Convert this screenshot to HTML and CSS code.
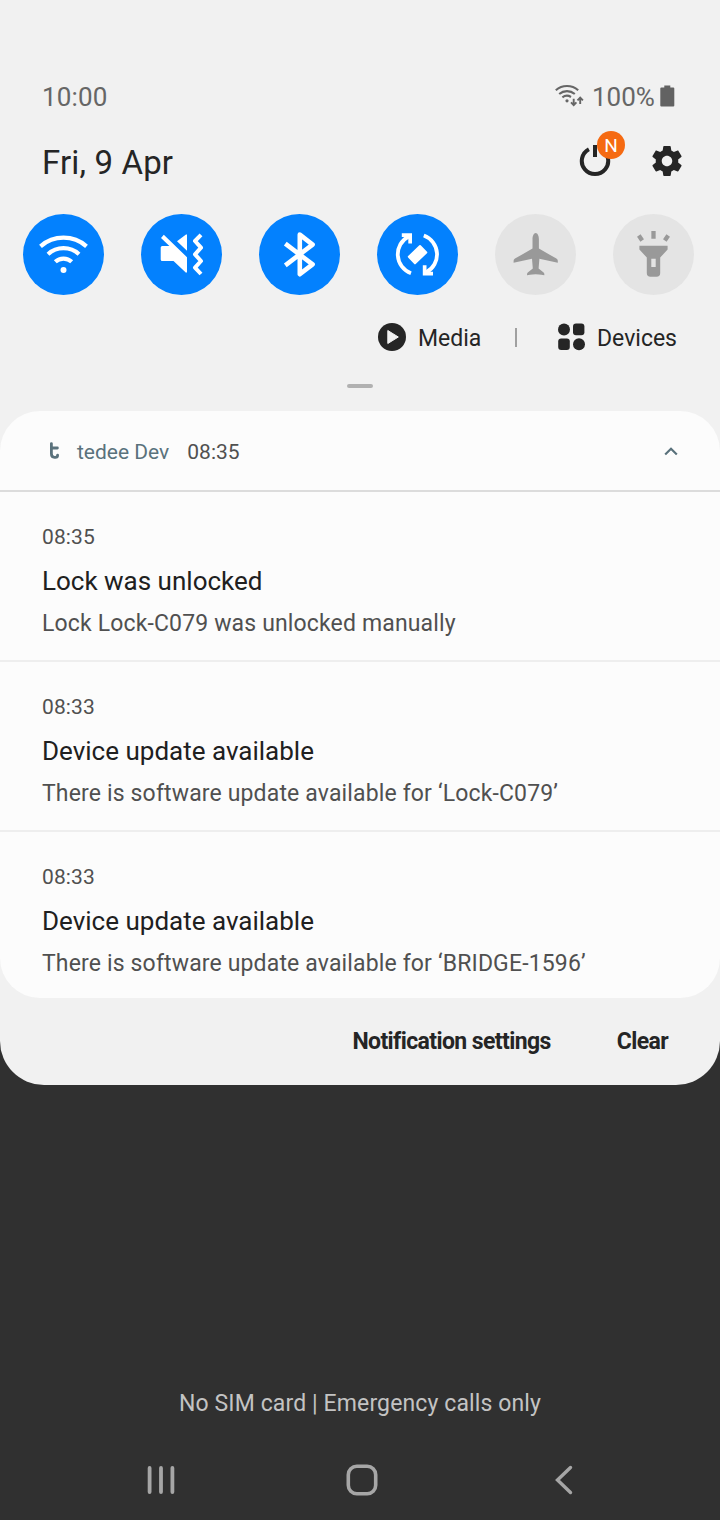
FILE: index.html
```html
<!DOCTYPE html>
<html lang="en">
<head>
<meta charset="utf-8">
<title>Notifications</title>
<link rel="stylesheet" href="styles.css">
</head>
<body>
<main class="screen">
  <section class="panel">
    <div class="status">
      <span class="clock">10:00</span>
      <div class="status-right">
        <svg class="status-wifi" width="29" height="23" viewBox="0 0 29 23" fill="none" stroke="#666" stroke-width="2.1">
          <path d="M.8 6.2A17 17 0 0 1 23.2 6.2M4.2 10A12 12 0 0 1 19.8 10M7.4 13.4A7.5 7.5 0 0 1 16 13"/>
          <circle cx="12" cy="16.8" r="1.6" fill="#666" stroke="none"/>
          <path stroke-width="1.9" d="M18.7 14.8V21M16 18.4L18.7 21.1L21.4 18.4M25.2 20V13.8M22.5 16.4L25.2 13.7L27.9 16.4"/>
        </svg>
        <span class="percent">100%</span>
        <svg class="battery" width="15" height="22" viewBox="0 0 15 22" fill="#626262"><path d="M4.3.5H10.3V2.5H13.3Q14.3 2.5 14.3 3.5V20.5Q14.3 21.5 13.3 21.5H1.3Q.3 21.5.3 20.5V3.5Q.3 2.5 1.3 2.5H4.3Z"/></svg>
      </div>
    </div>
    <div class="date-row">
      <span class="date">Fri, 9 Apr</span>
      <div class="date-actions">
        <div class="power">
          <svg width="32" height="34" viewBox="0 0 32 34" fill="none" stroke="#252525" stroke-width="4"><path d="M9.9 5.2A13.2 13.2 0 1 0 22.1 5.2"/><path d="M16 1V13"/></svg>
          <span class="badge">N</span>
        </div>
        <svg class="gear" width="36" height="36" viewBox="0 0 24 24" fill="#252525"><path d="M19.43 12.98c.04-.32.07-.64.07-.98s-.03-.66-.07-.98l2.11-1.65c.19-.15.24-.42.12-.64l-2-3.46c-.12-.22-.39-.3-.61-.22l-2.49 1c-.52-.4-1.08-.73-1.69-.98l-.38-2.65C14.46 2.18 14.25 2 14 2h-4c-.25 0-.46.18-.49.42l-.38 2.65c-.61.25-1.17.59-1.69.98l-2.49-1c-.23-.09-.49 0-.61.22l-2 3.46c-.13.22-.07.49.12.64l2.11 1.65c-.04.32-.07.65-.07.98s.03.66.07.98l-2.11 1.65c-.19.15-.24.42-.12.64l2 3.46c.12.22.39.3.61.22l2.49-1c.52.4 1.08.73 1.69.98l.38 2.65c.03.24.24.42.49.42h4c.25 0 .46-.18.49-.42l.38-2.65c.61-.25 1.17-.59 1.69-.98l2.49 1c.23.09.49 0 .61-.22l2-3.46c.12-.22.07-.49-.12-.64l-2.11-1.65zM12 15.5c-1.93 0-3.5-1.57-3.5-3.5s1.57-3.5 3.5-3.5 3.5 1.57 3.5 3.5-1.57 3.5-3.5 3.5z"/></svg>
      </div>
    </div>
    <div class="toggles">
      <div class="toggle on"><svg viewBox="0 0 81 81" fill="none" stroke="#fff" stroke-width="4.2"><path d="M17.5 32.3A35 35 0 0 1 63.5 32.3M25 40.2A23 23 0 0 1 56 40.2M32.3 47.8A12 12 0 0 1 48.7 47.8"/><circle cx="40.5" cy="56" r="3" fill="#fff" stroke="none"/></svg></div>
      <div class="toggle on"><svg viewBox="0 0 81 81" fill="#fff"><path d="M22.8 20.8L46 43.2V58.2L45 58.8L32.5 47H21.3Q19.7 47 19.7 45.4V33.6Q19.7 32 21.3 32H28.4L20 24Z"/><path d="M46 20.6V36.8L36 27.2L45 20.6Z"/><path d="M60 20.8L54 27L60 33.7L54 40.3L60 47L54 53.6L60 60" fill="none" stroke="#fff" stroke-width="4" stroke-linejoin="round"/></svg></div>
      <div class="toggle on"><svg viewBox="0 0 81 81" fill="none" stroke="#fff" stroke-width="4.6" stroke-linejoin="round"><path d="M26.3 29.7L53.6 50.4L40.8 60.2V20.6L53.6 30.6L26.3 51.3"/></svg></div>
      <div class="toggle on"><svg viewBox="0 0 81 81" fill="none" stroke="#fff" stroke-width="3.8"><g id="turn"><path d="M34 59.3A20.2 20.2 0 0 1 31.5 22.5"/><path d="M24.8 19.2H35V29.6H31.3V24.6L28.8 23H24.8Z" fill="#fff" stroke="none"/></g><use href="#turn" transform="rotate(180 40.4 40.4)"/><path d="M43 32L49.3 38.5L38 49.4L31.8 42.8Z" fill="#fff" stroke-width="2" stroke-linejoin="round"/></svg></div>
      <div class="toggle"><svg viewBox="0 0 81 81" fill="#999"><path d="M40.7 19C42.6 19 43.9 22 43.9 25V34.6L61.4 44.6Q62.8 45.4 62.8 46.7V48.8L44.4 44.8L43.6 54.6L48.6 58.6Q49.6 59.5 49.3 61.3Q43 60.3 40.7 60.3Q38.4 60.3 32.1 61.3Q31.8 59.5 32.8 58.6L37.8 54.6L37 44.8L18.6 48.8V46.7Q18.6 45.4 20 44.6L37.5 34.6V25C37.5 22 38.8 19 40.7 19Z"/></svg></div>
      <div class="toggle"><svg viewBox="0 0 81 81" fill="#999"><path fill-rule="evenodd" d="M26.4 31.7H54.6V35.5L47.2 43.6V59Q47.2 62.8 43.5 62.8H37.5Q33.8 62.8 33.8 59V43.6L26.4 35.5ZM38.3 44.7V53H42.7V44.7Z"/><path d="M40.5 17V24.7M25.8 21.6L29.2 26.5M55.2 21.6L51.8 26.5" stroke="#999" stroke-width="4.3"/></svg></div>
    </div>
    <div class="shortcuts">
      <div class="shortcut media">
        <svg width="28" height="28" viewBox="0 0 28 28"><circle cx="14" cy="14" r="14" fill="#252525"/><path d="M9.8 7.5L20.3 14L9.8 20.5Z" fill="#f1f1f1" stroke="#f1f1f1" stroke-width="1" stroke-linejoin="round"/></svg>
        <span class="shortcut-label">Media</span>
      </div>
      <i class="separator"></i>
      <div class="shortcut devices">
        <svg width="27" height="28" viewBox="0 0 27 28" fill="#252525"><circle cx="6" cy="6.5" r="6"/><rect x="15" y=".6" width="11.4" height="11.7" rx="3"/><rect x=".2" y="15.4" width="11.6" height="11.6" rx="3"/><circle cx="21" cy="21.3" r="6"/></svg>
        <span class="shortcut-label">Devices</span>
      </div>
    </div>
    <div class="handle"></div>
    <section class="card">
      <header class="card-head">
        <svg class="app-icon" width="12" height="18" viewBox="0 0 12 18" fill="none" stroke="#5a727c" stroke-width="2.8" stroke-linecap="round"><path d="M2.4 1.6V11.8Q2.4 15.3 5.5 15.3H6.3Q8.6 15.3 8.6 13.2M2.6 6H8.4"/></svg>
        <span class="app">tedee Dev</span>
        <span class="head-time">08:35</span>
        <svg class="chevron" width="14" height="9" viewBox="0 0 14 9" fill="none" stroke="#5a727c" stroke-width="2.2"><path d="M1.2 7.5L7 1.8L12.8 7.5"/></svg>
      </header>
      <article class="item">
        <div class="time">08:35</div>
        <div class="title">Lock was unlocked</div>
        <div class="text">Lock Lock-C079 was unlocked manually</div>
      </article>
      <article class="item">
        <div class="time">08:33</div>
        <div class="title">Device update available</div>
        <div class="text">There is software update available for ‘Lock-C079’</div>
      </article>
      <article class="item">
        <div class="time">08:33</div>
        <div class="title">Device update available</div>
        <div class="text">There is software update available for ‘BRIDGE-1596’</div>
      </article>
    </section>
    <footer class="actions">
      <span>Notification settings</span>
      <span>Clear</span>
    </footer>
  </section>
  <div class="carrier">No SIM card | Emergency calls only</div>
  <nav class="nav">
    <svg width="28" height="30" viewBox="0 0 28 30" stroke="#a6a6a6" stroke-width="3.8" stroke-linecap="round"><path d="M2.6 3V27M14 3V27M25.4 3V27"/></svg>
    <svg class="home" width="32" height="32" viewBox="0 0 32 32" fill="none" stroke="#a6a6a6" stroke-width="3.6"><rect x="2.3" y="2.3" width="27.4" height="27.4" rx="8.5"/></svg>
    <svg class="back" width="18" height="30" viewBox="0 0 18 30" fill="none" stroke="#a6a6a6" stroke-width="3.4" stroke-linecap="round"><path d="M15.5 2.5L2.5 15L15.5 27.5"/></svg>
  </nav>
</main>
</body>
</html>
```
FILE: styles.css
```css
* { box-sizing: border-box; }
body { margin: 0; font-family: Roboto, "Liberation Sans", sans-serif; color: #252525; }
svg { display: block; flex: none; }
span, .title, .text, .carrier { white-space: nowrap; }
.screen { width: 720px; height: 1520px; background: #303030; display: flex; flex-direction: column; }
.panel { height: 1085px; background: #f1f1f1; border-radius: 0 0 44px 44px; padding-top: 83px; display: flex; flex-direction: column; }

.status { height: 28px; padding: 0 45px 0 42px; display: flex; justify-content: space-between; align-items: center; font-size: 26px; line-height: 28px; color: #666; }
.clock { letter-spacing: .15px; }
.status-right { display: flex; align-items: center; }
.status-wifi { margin-bottom: 3px; }
.battery { margin-bottom: 3px; }
.percent { margin-left: 8px; width: 68px; }

.date-row { height: 54px; margin-top: 25px; padding: 0 35px 0 42px; display: flex; justify-content: space-between; align-items: center; }
.date { font-size: 33px; line-height: 40px; letter-spacing: .15px; }
.date-actions { display: flex; align-items: center; gap: 38px; margin-top: -4px; }
.power { position: relative; }
.badge { position: absolute; left: 18px; top: -13px; width: 28px; height: 28px; border-radius: 50%; background: #f56a12; color: #fff; font-size: 19px; line-height: 29px; text-align: center; }

.toggles { margin-top: 24px; padding-left: 23px; display: flex; gap: 37px; }
.toggle { width: 81px; height: 81px; border-radius: 50%; background: #e4e4e4; }
.toggle.on { background: #0381fe; }

.shortcuts { height: 32px; margin-top: 26px; padding: 0 43px 0 378px; display: flex; align-items: center; font-size: 23px; line-height: 32px; }
.shortcut { display: flex; align-items: center; gap: 12px; }
.shortcut-label { padding-top: 3px; margin-bottom: -1px; }
.media { width: 137px; }
.separator { width: 2px; height: 19px; margin-right: 41px; background: #a0a0a0; }
.handle { width: 26px; height: 4px; margin: 31px auto 0; border-radius: 2px; background: #b1b1b1; }

.card { height: 587px; margin-top: 23px; border-radius: 40px; background: #fcfcfc; overflow: hidden; }
.card-head { height: 81px; padding: 2px 42px 0 49px; border-bottom: 2px solid #dcdcdc; display: flex; align-items: center; font-size: 21px; line-height: 30px; }
.app-icon { margin-bottom: 2px; }
.app { margin-left: 16px; color: #5a727c; }
.head-time { margin-left: 18px; color: #505050; }
.chevron { margin-left: auto; }
.item { height: 170px; padding: 32px 42px 0; border-bottom: 2px solid #eee; }
.item:last-child { border: 0; }
.time { font-size: 21px; line-height: 26px; letter-spacing: .1px; color: #505050; }
.title { margin-top: 13px; font-size: 26px; line-height: 36px; color: #202020; }
.text { margin-top: 8px; font-size: 23px; line-height: 34px; letter-spacing: .15px; color: #505050; }

.actions { height: 87px; padding: 0 52px; display: flex; justify-content: flex-end; align-items: center; gap: 66px; font-size: 23px; font-weight: 700; letter-spacing: -.6px; }
.carrier { margin-top: 303px; text-align: center; font-size: 23px; line-height: 32px; letter-spacing: .12px; color: #c3c3c3; }
.nav { height: 82px; margin-top: 19px; padding: 0 147px; display: flex; align-items: center; }
.home { margin-left: 171px; }
.back { margin-left: auto; }
```
